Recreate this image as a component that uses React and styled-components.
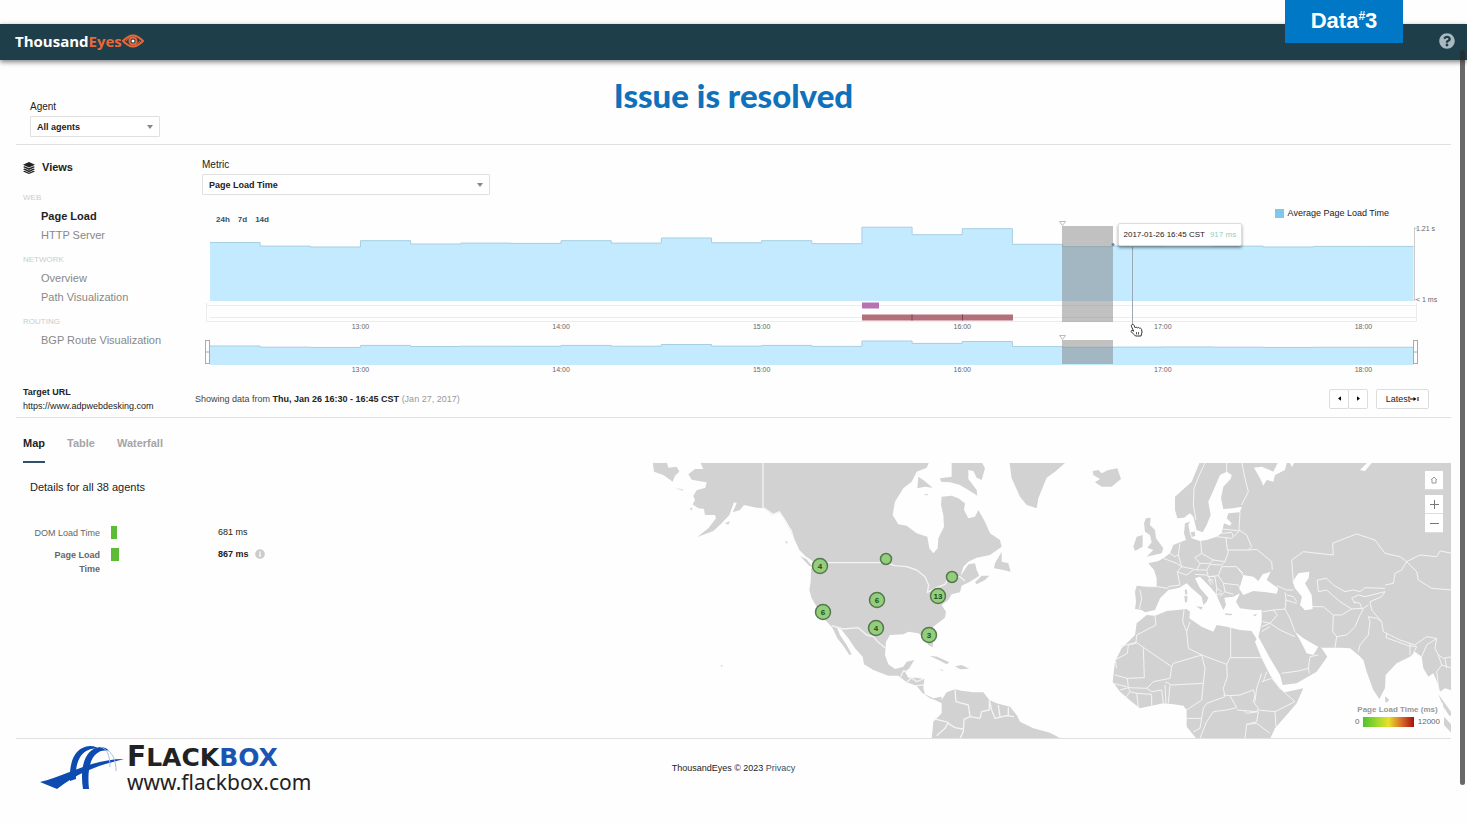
import React, { useState } from 'react';
import styled, { createGlobalStyle } from 'styled-components';
import { FaQuestionCircle, FaInfoCircle } from 'react-icons/fa';

const GlobalStyle = createGlobalStyle`
  * {
    box-sizing: border-box;
  }
  body {
    margin: 0;
    background-color: #fefefe;
    color: #222;
    font-family: "Liberation Sans", Arial, sans-serif;
    font-size: 9px;
  }
  button, select {
    font-family: inherit;
    color: inherit;
  }
`;

const Page = styled.div`
  position: relative;
  padding-top: 24px;
`;
const Header = styled.header`
  display: flex;
  align-items: center;
  justify-content: space-between;
  height: 36px;
  padding: 0 12px 2px 15px;
  background-color: #1e3f4a;
  box-shadow: 0 2px 5px rgba(0, 0, 0, 0.5);
`;
const Brand = styled.a`
  display: flex;
  align-items: center;
  color: #fff;
  font-family: "Open Sans", sans-serif;
  font-size: 15px;
  font-weight: 700;
  line-height: 20px;
  text-decoration: none;

  span {
    color: #e8683a;
  }
`;
const HelpButton = styled.button`
  display: flex;
  padding: 0;
  border: 0;
  background: none;
  color: #a9b9bf;
  font-size: 16px;
`;
const Badge = styled.div`
  position: absolute;
  top: 0;
  right: 64px;
  width: 118px;
  height: 43px;
  background-color: #0078c6;
  color: #fff;
  font-size: 22px;
  font-weight: 700;
  line-height: 42px;
  text-align: center;

  sup {
    font-size: 12px;
    line-height: 0;
  }
`;
const ScrollThumb = styled.div`
  position: absolute;
  top: 50px;
  right: 2px;
  bottom: 40px;
  width: 5px;
  border-radius: 3px;
  background-color: rgba(40, 40, 40, 0.7);
`;
const Content = styled.main`
  padding: 0 16px;
`;
const FilterBar = styled.section`
  display: grid;
  grid-template-columns: 1fr auto 1fr;
  height: 85px;
  border-bottom: 1px solid #e0e0e0;
`;
const Field = styled.div`
  display: flex;
  flex-direction: column;
  gap: 2px;
  width: ${({ $wide }) => ($wide ? '288px' : '130px')};

  label {
    font-size: 10px;
    line-height: 14px;
  }
`;
const AgentField = styled(Field)`
  margin: 40px 0 0 14px;
`;
const SelectBox = styled.div`
  position: relative;

  svg {
    position: absolute;
    top: 9px;
    right: 7px;
    pointer-events: none;
  }
`;
const Select = styled.select`
  appearance: none;
  display: block;
  width: 100%;
  height: 21px;
  padding: 0 20px 0 6px;
  border: 1px solid #e0e0e0;
  border-radius: 1px;
  background-color: #fff;
  font-size: 9px;
  font-weight: 700;
`;
const Caption = styled.h1`
  margin: 14px 0 0;
  color: #0f71bb;
  font-family: Lato, sans-serif;
  font-size: 33px;
  font-weight: 900;
  line-height: 42px;
`;
const Timeline = styled.section`
  display: grid;
  grid-template-columns: 186px minmax(0, 1fr);
  padding-top: 13px;
`;
const Sidebar = styled.nav`
  padding-left: 7px;
`;
const SidebarTitle = styled.h2`
  display: flex;
  align-items: center;
  gap: 7px;
  margin: 0 0 11px;
  font-size: 11px;
  line-height: 19px;
`;
const Group = styled.ul`
  margin: 0 0 5px;
  padding: 0;
  list-style: none;
`;
const GroupName = styled.li`
  color: #ccc;
  font-size: 8px;
  line-height: 19px;
`;
const ViewLink = styled.a`
  display: block;
  padding-left: 18px;
  color: ${({ $active }) => ($active ? '#222' : '#888')};
  font-size: 11px;
  font-weight: ${({ $active }) => ($active ? 700 : 400)};
  line-height: 19px;
  text-decoration: none;
`;
const Toolbar = styled.div`
  display: flex;
  align-items: flex-end;
  justify-content: space-between;
  height: 26px;
  margin-top: 5px;
  padding: 0 62px 0 14px;
`;
const Ranges = styled.div`
  display: flex;
  gap: 8px;
`;
const RangeButton = styled.button`
  padding: 0;
  border: 0;
  background: none;
  color: #2f5068;
  font-size: 8px;
  font-weight: 700;
  line-height: 12px;
`;
const Legend = styled.div`
  display: flex;
  align-items: center;
  gap: 4px;
  line-height: 26px;

  i {
    width: 9px;
    height: 9px;
    background-color: #7dc8ec;
  }
`;
const ChartBox = styled.div`
  position: relative;
`;
const Chart = styled.svg`
  display: block;
  width: 100%;
  overflow: visible;

  text {
    fill: #666;
    font-size: 7px;
  }
`;
const Tooltip = styled.div`
  position: absolute;
  top: -3px;
  left: 73.3%;
  display: flex;
  gap: 5px;
  padding: 0 5px;
  border: 1px solid #ddd;
  border-radius: 2px;
  background-color: #fff;
  box-shadow: 0 2px 3px rgba(0, 0, 0, 0.4);
  font-size: 8px;
  line-height: 21px;
  white-space: nowrap;

  span {
    color: #8fcfc8;
  }
`;
const StatusBar = styled.section`
  display: flex;
  align-items: center;
  height: 42px;
  padding: 4px 22px 0 7px;
  border-bottom: 1px solid #e0e0e0;
`;
const Target = styled.div`
  width: 172px;
  line-height: 14px;
`;
const Showing = styled.p`
  flex: 1;
  margin: 0;
  color: #444;

  b {
    color: #222;
  }
  span {
    color: #999;
  }
`;
const Pager = styled.div`
  display: flex;
  margin-right: 8px;
`;
const SmallButton = styled.button`
  display: flex;
  align-items: center;
  justify-content: center;
  width: ${({ $wide }) => ($wide ? '53px' : '20px')};
  height: 20px;
  padding: 0;
  border: 1px solid #ddd;
  border-radius: 2px;
  background-color: #fff;
  font-size: 9px;

  & + & {
    margin-left: -1px;
  }
`;
const Tabs = styled.div`
  display: flex;
  gap: 22px;
  padding-left: 7px;
`;
const Tab = styled.button`
  padding: 18px 0 11px;
  border: 0;
  border-bottom: 2px solid ${({ $active }) => ($active ? '#2f5068' : 'transparent')};
  background: none;
  color: ${({ $active }) => ($active ? '#222' : '#a5a5a5')};
  font-size: 11px;
  font-weight: 700;
  line-height: 14px;
`;
const MapSection = styled.section`
  display: grid;
  grid-template-columns: 636px minmax(0, 1fr);
  border-bottom: 1px solid #e0e0e0;
`;
const Details = styled.div`
  padding: 17px 0 0 14px;

  h3 {
    margin: 0 0 32px;
    font-size: 11px;
    font-weight: 400;
    line-height: 14px;
  }
`;
const Metrics = styled.table`
  border-collapse: collapse;
  line-height: 14px;

  th {
    width: 70px;
    padding: 0 0 8px;
    color: #666;
    font-weight: 400;
    text-align: right;
    vertical-align: top;
  }
  td {
    padding: 0 0 8px;
    vertical-align: top;
  }
  tr:last-child th, tr:last-child td {
    font-weight: 700;
  }
`;
const BarCell = styled.td`
  width: 118px;
`;
const Bar = styled.div`
  height: 13px;
  margin-left: 11px;
  background-color: #5dbb35;
`;
const Value = styled.div`
  display: flex;
  align-items: center;
  gap: 6px;
  margin-top: -1px;

  svg {
    color: #ccc;
  }
`;
const MapBox = styled.div`
  position: relative;
`;
const WorldMap = styled.svg`
  display: block;
  width: 100%;

  text {
    fill: #1d4d1a;
    font-size: 8px;
    font-weight: 700;
    text-anchor: middle;
  }
`;
const MapControls = styled.div`
  position: absolute;
  top: 8px;
  right: 8px;
  display: flex;
  flex-direction: column;
`;
const MapButton = styled.button`
  display: flex;
  align-items: center;
  justify-content: center;
  width: 18px;
  height: 19px;
  margin-bottom: ${({ $apart }) => ($apart ? '5px' : '0')};
  padding: 0;
  border: 0;
  border-bottom: 1px solid #ddd;
  background-color: #fff;
`;
const Scale = styled.div`
  position: absolute;
  right: 8px;
  bottom: 9px;
  width: 91px;
  padding: 1px 3px;
  background-color: rgba(255, 255, 255, 0.85);
  color: #666;
  font-size: 8px;
  line-height: 12px;

  h4 {
    margin: 0;
    color: #999;
    font-size: 8px;
    text-align: center;
  }
  div {
    display: flex;
    align-items: center;
    gap: 4px;
  }
  i {
    flex: 1;
    height: 10px;
    background: linear-gradient(90deg, #4cc32e, #a5d92c 30%, #e8e02a 50%, #d9702a 75%, #a80f0f);
  }
`;
const Footer = styled.footer`
  display: grid;
  grid-template-columns: 1fr auto 1fr;
  height: 86px;
  padding: 0 16px 0 40px;

  p {
    margin: 22px 24px 0 0;
    line-height: 14px;
  }
  p a {
    color: #2f5068;
    text-decoration: none;
  }
`;
const Flackbox = styled.div`
  display: flex;
  gap: 3px;
  padding-top: 6px;
`;
const FlackboxName = styled.div`
  color: #222;
  font-family: "DejaVu Sans", sans-serif;
  font-size: 25px;
  font-weight: 700;
  line-height: 25px;

  big {
    font-size: 28px;
    line-height: 0;
  }
  span {
    color: #1b55b3;
  }
  small {
    display: block;
    font-family: "Noto Sans", sans-serif;
    font-size: 21px;
    font-weight: 400;
    line-height: 24px;
  }
`;

// average page load in ms, one value per 15 minutes from 12:15
const series = [
  975, 915, 900, 1005, 950, 965, 960, 1005, 965, 1050, 970, 1005,
  955, 1230, 1105, 1205, 945, 906, 917, 925, 915, 900, 910, 910,
];
const hours = ['13:00', '14:00', '15:00', '16:00', '17:00', '18:00'];
const START = 8;
const STEP = 50.15;

const stepLine = (base, scale) =>
  series
    .map((v, i) => {
      const y = base - v * scale;
      return `${i ? 'L' : 'M'}${START + i * STEP} ${y}H${START + (i + 1) * STEP}`;
    })
    .join('');

const Area = ({ base, scale }) => (
  <g>
    <path d={`${stepLine(base, scale)}V${base}H${START}Z`} fill="#c4eaff" />
    <path d={stepLine(base, scale)} fill="none" stroke="#a6cfe2" />
  </g>
);

const HourLabels = ({ y }) =>
  hours.map((h, i) => (
    <text key={h} x={START + (i * 4 + 3) * STEP} y={y} textAnchor="middle">{h}</text>
  ));

const Handle = ({ x }) => (
  <g fill="#fff" stroke="#aaa">
    <rect x={x} y="114.5" width="4" height="23" />
    <path d={`M${x} 126h4`} />
  </g>
);

const TimelineChart = () => (
  <Chart viewBox="0 0 1249 150" role="img" aria-label="Average Page Load Time">
    <Area base={75} scale={0.06} />
    <path d="M4.500 77V95.500H1214.500V77M4 79.500H1214M8 91.500H1214" fill="none" stroke="#ececec" />
    <rect x="660" y="76.500" width="17" height="6" fill="#b673b0" />
    <rect x="660" y="88.500" width="151" height="6" fill="#b56f7b" />
    <path d="M710 88.500v6M760.500 88.500v6" stroke="#84434f" />
    <path d="M1212.500 1V75M1212 2.500h3M1212 73.500h3" fill="none" stroke="#ccc" />
    <text x="1214" y="5">1.21 s</text>
    <text x="1214" y="76">&lt; 1 ms</text>
    <HourLabels y={103} />

    <Area base={139} scale={0.0195} />
    <Handle x={3.5} />
    <Handle x={1211.5} />
    <HourLabels y={146} />

    <rect x="860" y="0" width="51" height="96" fill="#808080" fillOpacity=".48" />
    <rect x="860" y="114" width="51" height="24" fill="#808080" fillOpacity=".48" />
    <path d="M857.500-4.500h6l-3 4zM857.500 109.500h6l-3 4z" fill="#fff" stroke="#bbb" />
    <circle cx="911" cy="18.500" r="1.500" fill="#5f8ba3" />
    <path d="M930.500 21V99" stroke="#9aa9b3" />
    <path
      d="M929.500 99c.8-1 2-.8 2.500.3l1.300 2.700c.5-1 1.700-1 2.200 0 .6-.8 1.700-.7 2 .3.800-.5 1.700 0 2 1l.5 2.700c0 1.500-.8 2.500-1 4h-5.500c-.8-1.500-3.200-2.500-4.300-4.300-.5-1 .7-1.800 1.800-1l.7.6-2.200-4.800c-.2-.6-.2-1 0-1.500z"
      fill="#fff"
      stroke="#333"
    />
    <path d="M934.500 106v2.500M936.500 106v2.500" stroke="#333" strokeWidth=".8" />
  </Chart>
);

const americas = `
M180 20L190 42 165 42 145 58 155 74 190 80 200 82 196 98 170 106 160 122 165 136 158 148 175 160 192 162 195 180 225 180
228 190 205 220 172 246 220 228 245 205 268 180 282 142 290 145 278 172 300 165 312 150 350 158 372 160 395 178 420 172
435 195 455 225 462 250 478 285 495 302 520 320 513 345 512 380 508 405 515 430 530 455 540 480 565 505 578 520 592 550
612 575 628 600 635 598 620 570 600 540 590 515 605 525 625 550 645 580 668 605 672 628 700 645 745 662 775 662 800 682
830 692 845 712 870 730 885 735 905 745 905 725 880 730 855 718 850 700 853 672 830 668 805 668 795 650 808 640 823 615
800 620 790 635 765 642 745 628 735 600 738 560 750 540 790 538 805 530 835 535 850 545 865 570 878 577 880 555 870 530
880 515 915 488 918 470 905 450 925 435 935 418 960 412 965 392 990 380 1018 362 1010 345 1005 325 985 328 962 362
970 335 985 320 1010 308 1050 300 1085 275 1080 255 1050 235 1035 200 1015 165 1005 185 985 190 972 165 975 145 955 130
935 122 905 125 903 150 910 180 912 215 895 250 893 280 880 295 868 280 862 245 830 235 800 212 775 208 758 180 765 140
790 100 815 80 830 50 860 38 868 20Z
M935 20L935 65 900 70 903 80 930 82 960 90 985 105 1012 122 1010 105 985 72 985 45 1000 48 1010 68 1025 75 1035 40 1025 20Z
M835 65L832 100 855 95 878 98 850 75Z M38 20L42 50 70 60 98 80 105 62 118 50 110 35 85 38 80 20Z
M105 98L130 104 128 107Z M150 158l8 2-5 7z M255 205L270 198 265 209Z M435 258l8 2-3 7z M480 303L500 313 518 335 508 333Z
M1085 290L1065 325 1062 340 1090 345 1112 350 1105 325 1085 320Z M1005 382L1025 362 1048 362 1035 375 1010 388Z
M1108 20L1115 70 1140 125 1160 150 1190 160 1195 130 1205 105 1220 68 1245 50 1275 24V20Z
M868 602L892 605 928 622 920 628 895 615Z M945 634L965 630 988 641 960 643Z M898 643l12 2-2 3z M850 120l12-4 2 5z M242 630l6 1-2 6z
M905 735L920 712 945 703 965 707 1000 712 1030 712 1048 735 1070 745 1110 755 1130 780 1140 800 1180 820 1230 833 1265 852H875L880 800 905 775Z`;

const americasBorders = `
M369 20V157L400 178 418 170 438 200 458 240M515 323H735L765 332 800 335 830 345 855 365 866 390 862 412 890 398 915 388
928 368 960 365 975 378M575 512L610 522 655 518 680 540 700 545 715 562 735 578M782 665L790 648 803 650M800 682L815 668
830 680 850 672M828 692L852 690M945 703L948 740 985 750 990 785 1020 790 1025 770 1048 765V735M1048 735L1055 765 1065 790
1100 782 1122 785M1075 750L1080 785M1105 757L1105 785M990 785L972 793 970 830 960 850M885 792L925 802 915 820 890 842
M925 805L945 818 968 822`;

const oldWorld = `
M480 20L455 80 405 125 405 165 412 190 432 188 450 175 460 185 470 225 488 232 500 210 512 180 505 140 525 95 540 60 560 50
575 60 572 72 550 95 543 130 550 162 580 160 605 155 600 172 565 175 560 190 575 205 570 212 552 205 545 235 530 245
500 255 480 258 455 250 450 235 445 210 450 200 435 205 432 235 438 255 420 262 400 270 390 295 370 310 355 318 325 325
342 345 350 370 350 395 320 395 290 392 285 410 288 440 285 462 305 465 315 472 345 465 360 430 385 405 418 398 440 385
455 400 485 425 490 450 500 440 505 428 480 400 465 370 480 365 510 395 530 420 540 445 550 465 558 450 553 428 580 425
600 415 588 440 600 460 640 465 665 465 665 500 660 525 655 545 690 610 720 660 728 690 770 685 830 650 862 605 845 580
835 575 820 600 800 595 780 555 765 530 790 550 825 570 840 578 900 578 930 580 955 600 970 615 980 650 1000 705 1018 732
1035 700 1037 660 1070 625 1110 605 1125 590 1145 605 1150 640 1165 665 1180 655 1195 690 1200 710 1215 700 1245 710V20Z
M320 480L345 482 380 468 440 462 450 470 448 490 485 515 520 530 530 510 560 515 600 525 635 528 650 552 645 560 665 610
690 660 718 700 735 712 790 700 770 745 740 780 705 820 690 852H470L440 815 440 765 430 752 400 748 370 745 335 752
300 760 275 740 240 710 218 680 225 620 245 580 285 540 290 505Z
M158 48L175 45 185 55 205 45 232 40 243 72 215 95 185 95 165 82 180 72 160 60Z
M318 190L332 188 330 210 345 225 348 250 370 280 365 295 320 305 340 285 322 278 335 262 330 240 315 230 312 205Z
M290 245L308 240 308 275 285 288 280 275Z M452 232l12-2 2 12-10 4z M434 405l6-2 2 14-6 2z M433 422l10 2-2 18-6 0z
M468 454L488 456 484 464Z M555 475l22 2-2 4-18-1z M638 480l14-4-6 8z M1036 724L1048 734 1040 743 1035 738Z
M1195 718L1240 780 1228 782 1210 755Z M1212 785L1240 815V840L1212 810Z M775 706l8 1-4 3z`;

const seas = `
M598 402L610 360 640 365 655 378 668 358 692 350 680 375 715 400 710 416 680 412 640 408 610 420Z
M758 380L775 355 808 350 806 370 795 385 815 420 818 462 795 466 780 450 786 425 765 400Z
M642 38L665 35 700 50 715 20 740 24 735 45 705 60 700 80 680 75 670 92 660 70Z M960 45L985 20 995 24 975 48Z M748 20l8 16 8-16z`;

const oldWorldBorders = `
M495 24L478 60 462 100 460 150 468 195M560 20V50M605 20L615 70 625 110 605 150M600 172L597 225 620 240 635 275 625 285
650 283 695 320 697 345M548 222L575 225 598 228M530 245L558 248 575 250 598 228M558 248L562 285 625 285M545 235L575 232 580 245
M482 258L485 295 520 315 555 320 565 290 562 285M485 295L465 308 480 325 510 325 520 315M420 265L415 300 425 335 450 340
470 345 480 325M370 310L410 325 425 335M390 295L405 305 415 300M385 395L420 390 412 350 425 335M412 350L440 360 460 345
M320 395L350 395 385 400M300 405L305 430 298 462M470 345L500 345 510 328 545 330 555 320M500 345L505 365 535 362 545 335
590 335 610 362M535 362L550 385 595 390 600 400M550 385L555 410 580 418M465 358L500 360 520 385M505 365L525 365 530 400 545 410
M520 375L505 375 515 390M530 400L528 420 545 415M595 340L610 355M555 410L540 425
M710 392L740 405 760 405M735 412L738 435 735 462 700 465 668 470M738 435L770 445M740 420L760 425 770 440M735 462L750 490 765 530
M700 465L712 480 690 505 665 515M690 505L720 525 765 545M668 500L690 505M665 530L690 515M725 655L775 648 805 640 810 605
835 600M805 640L808 655M815 455L850 455 880 480 878 530 890 545 885 578M880 480L905 480 935 462 970 460 985 450M890 545L920 540
945 515 960 480 970 462M955 590L960 570 985 540 990 500 985 485 1010 490 1025 500M760 380L755 315 790 290 880 300 878 265
915 250 950 237 1005 255 1035 295 1080 305 1100 320 1085 345 1065 355 1060 385 1035 390M1100 320L1140 300 1190 305 1200 288
1237 295M1100 320L1130 350 1135 375 1175 400 1237 405M835 410L832 375 860 370 880 390 915 410 940 405 960 410 975 398
1035 400M835 410L860 405 900 440 935 462M935 430L955 420 975 425 1035 410 1025 425 990 440M940 440L960 445 965 460M935 430
L945 445M990 440L995 465 1025 500 1030 530 1080 555 1110 565 1125 570 1160 545 1190 550 1185 580 1195 600M1040 535
L1038 548 1105 572M1110 565L1110 600M1105 572L1130 575 1120 595M1190 550L1160 570 1145 605M1195 600L1210 610 1237 605
M1195 600L1205 630 1190 650 1195 690M1205 630L1237 640M1215 610L1220 640
M345 482L348 510 290 540 288 562 395 635 400 625 485 600 445 580 440 530 428 500 432 465M450 500L440 530M288 562L240 575
M288 565L265 570 262 595 225 615M310 580L313 668 262 670 225 660M395 635L390 670 340 680 320 700 265 698 262 670M485 600
L495 640 490 685 395 690 375 680M485 600L560 628 572 605V515M572 608H665M560 628L562 665 550 700 555 725 500 745 490 760
M490 685L485 735 440 765M218 685L260 695M240 705L265 698 270 710 255 730M270 710L290 715 295 755M290 715L335 718V752M335 710
L365 705 370 745M320 700L335 710M375 690L378 745M390 690L385 745M550 720L570 722 590 758 560 765 520 770 500 800M570 722
L600 720 640 705 645 720 640 740 655 760 650 770 590 765M665 655L650 700 645 740M670 680L680 650M665 680L695 670 725 705
M725 705L765 740 705 770 655 765M705 770L708 815M612 768L620 775 655 770 650 800 620 808 615 850M620 808L650 805 690 835
M490 760L485 790 440 790M485 790L480 820 460 830M500 800L480 850M230 640L225 612`;

const agents = [
  { x: 168, y: 103, count: 4 },
  { x: 171, y: 149, count: 6 },
  { x: 225, y: 137, count: 6 },
  { x: 224, y: 165, count: 4 },
  { x: 234, y: 96 },
  { x: 300, y: 114 },
  { x: 286, y: 133, count: 13 },
  { x: 277, y: 172, count: 3 },
];

const AgentMap = () => (
  <WorldMap viewBox="0 0 799 275" role="img" aria-label="Agents by location">
    <g transform="translate(-12 -8) scale(.33333)" strokeLinejoin="round">
      <path d={americas} fill="#d2d2d2" />
      <path d={americasBorders} fill="none" stroke="#f4f4f4" strokeWidth="4" />
    </g>
    <g transform="translate(388 -8) scale(.33333)" strokeLinejoin="round">
      <path d={oldWorld} fill="#d2d2d2" />
      <path d={seas} fill="#fefefe" />
      <path d={oldWorldBorders} fill="none" stroke="#f4f4f4" strokeWidth="3" />
    </g>
    {agents.map(({ x, y, count }) => (
      <g key={`${x}-${y}`}>
        <circle cx={x} cy={y} r={count ? 7.5 : 5.5} fill="#92ce7c" stroke="#56784e" strokeWidth="1.500" />
        {count && <text x={x} y={y + 3}>{count}</text>}
      </g>
    ))}
  </WorldMap>
);

const EyeIcon = () => (
  <svg width="22" height="14" viewBox="0 0 22 14" fill="none" stroke="#e8683a" strokeWidth="2">
    <path d="M1 7c4-4 7-5.500 10-5.500S17 3 21 7c-4 4-7 5.500-10 5.500S5 11 1 7z" />
    <path d="M4 7c3-3 4-3.500 6-3.500M18 7c-3 3-4 3.500-6 3.500" strokeWidth="1" />
    <circle cx="11" cy="7" r="3.500" fill="#1e3f4a" />
    <circle cx="11" cy="7" r="1.500" fill="#fff" stroke="none" />
  </svg>
);

const LayersIcon = () => (
  <svg width="12" height="12" viewBox="0 0 12 12" fill="#222">
    <path d="M6 0L12 2.800 6 5.600 0 2.800z" />
    <path d="M0 5l1.600-.8L6 6.300l4.400-2.100L12 5 6 7.900z" />
    <path d="M0 7.300l1.600-.8L6 8.600l4.400-2.100 1.600.8-6 2.900z" />
    <path d="M0 9.500l1.600-.8L6 10.700l4.400-2 1.600.8-6 2.500z" />
  </svg>
);

const Caret = () => (
  <svg width="6" height="4" viewBox="0 0 6 4" fill="#888">
    <path d="M0 0h6L3 4z" />
  </svg>
);

const BridgeIcon = () => (
  <svg width="84" height="46" viewBox="0 0 84 46">
    <path d="M0 37C28 30 52 14 84 14 60 20 40 26 17 44z" fill="#0d4bb0" />
    <path d="M30 36C29 18 34 2 50 1c5 0 9 2 12 5-4-3-8-3-11-2-11 3-16 14-15 30z" fill="#0d4bb0" />
    <path d="M43 44C40 26 43 4 60 2c4 0 7 1 9 4-14-3-23 10-20 38z" fill="#0d4bb0" />
    <path d="M60 2c7 1 10 8 10 20M67 5c6 3 9 11 9 21" fill="none" stroke="#a9bfe2" />
  </svg>
);

const views = [
  { name: 'WEB', items: ['Page Load', 'HTTP Server'] },
  { name: 'NETWORK', items: ['Overview', 'Path Visualization'] },
  { name: 'ROUTING', items: ['BGP Route Visualization'] },
];

const App = () => {
  const [view, setView] = useState('Page Load');
  const [tab, setTab] = useState('Map');

  return (
    <>
      <GlobalStyle />
      <Page>
        <Header>
          <Brand href="#">Thousand<span>Eyes</span><EyeIcon /></Brand>
          <HelpButton aria-label="Help"><FaQuestionCircle /></HelpButton>
        </Header>
        <Badge>Data<sup>#</sup>3</Badge>
        <Content>
          <FilterBar>
            <AgentField>
              <label htmlFor="agent">Agent</label>
              <SelectBox>
                <Select id="agent"><option>All agents</option></Select>
                <Caret />
              </SelectBox>
            </AgentField>
            <Caption>Issue is resolved</Caption>
          </FilterBar>

          <Timeline>
            <Sidebar>
              <SidebarTitle><LayersIcon />Views</SidebarTitle>
              {views.map(({ name, items }) => (
                <Group key={name}>
                  <GroupName>{name}</GroupName>
                  {items.map((item) => (
                    <li key={item}>
                      <ViewLink href="#" $active={item === view} onClick={() => setView(item)}>{item}</ViewLink>
                    </li>
                  ))}
                </Group>
              ))}
            </Sidebar>
            <div>
              <Field $wide>
                <label htmlFor="metric">Metric</label>
                <SelectBox>
                  <Select id="metric"><option>Page Load Time</option></Select>
                  <Caret />
                </SelectBox>
              </Field>
              <Toolbar>
                <Ranges>
                  <RangeButton>24h</RangeButton>
                  <RangeButton>7d</RangeButton>
                  <RangeButton>14d</RangeButton>
                </Ranges>
                <Legend><i />Average Page Load Time</Legend>
              </Toolbar>
              <ChartBox>
                <TimelineChart />
                <Tooltip>2017-01-26 16:45 CST <span>917 ms</span></Tooltip>
              </ChartBox>
            </div>
          </Timeline>

          <StatusBar>
            <Target>
              <b>Target URL</b>
              <div>https://www.adpwebdesking.com</div>
            </Target>
            <Showing>
              Showing data from <b>Thu, Jan 26 16:30 - 16:45 CST</b> <span>(Jan 27, 2017)</span>
            </Showing>
            <Pager>
              <SmallButton aria-label="Previous">
                <svg width="3" height="5" viewBox="0 0 4 6"><path d="M4 0v6L0 3z" /></svg>
              </SmallButton>
              <SmallButton aria-label="Next">
                <svg width="3" height="5" viewBox="0 0 4 6"><path d="M0 0v6l4-3z" /></svg>
              </SmallButton>
            </Pager>
            <SmallButton $wide>
              Latest
              <svg width="9" height="6" viewBox="0 0 9 6"><path d="M0 2.500h3.500V1L6.500 3l-3 2V3.500H0zM7.500 1h1v4h-1z" /></svg>
            </SmallButton>
          </StatusBar>

          <Tabs>
            {['Map', 'Table', 'Waterfall'].map((name) => (
              <Tab key={name} $active={name === tab} onClick={() => setTab(name)}>{name}</Tab>
            ))}
          </Tabs>
          <MapSection>
            <Details>
              <h3>Details for all 38 agents</h3>
              <Metrics>
                <tbody>
                  <tr>
                    <th scope="row">DOM Load Time</th>
                    <BarCell><Bar style={{ width: 681 / 110 }} /></BarCell>
                    <td><Value>681 ms</Value></td>
                  </tr>
                  <tr>
                    <th scope="row">Page Load<br />Time</th>
                    <BarCell><Bar style={{ width: 867 / 110 }} /></BarCell>
                    <td><Value>867 ms <FaInfoCircle size={10} /></Value></td>
                  </tr>
                </tbody>
              </Metrics>
            </Details>
            <MapBox>
              <AgentMap />
              <MapControls>
                <MapButton $apart aria-label="Reset map">
                  <svg width="8" height="8" viewBox="0 0 8 8" fill="none" stroke="#999">
                    <path d="M1 4l3-3 3 3M2 3.500V7h4V3.500" />
                  </svg>
                </MapButton>
                <MapButton aria-label="Zoom in">
                  <svg width="9" height="9" viewBox="0 0 9 9" stroke="#777"><path d="M4.500 0v9M0 4.500h9" /></svg>
                </MapButton>
                <MapButton aria-label="Zoom out">
                  <svg width="9" height="9" viewBox="0 0 9 9" stroke="#777"><path d="M0 4.500h9" /></svg>
                </MapButton>
              </MapControls>
              <Scale>
                <h4>Page Load Time (ms)</h4>
                <div>0<i />12000</div>
              </Scale>
            </MapBox>
          </MapSection>
        </Content>
        <Footer>
          <Flackbox>
            <BridgeIcon />
            <FlackboxName>
              <big>F</big>LACK<span>BOX</span>
              <small>www.flackbox.com</small>
            </FlackboxName>
          </Flackbox>
          <p>ThousandEyes © 2023 <a href="#">Privacy</a></p>
        </Footer>
        <ScrollThumb />
      </Page>
    </>
  );
};

export default App;
